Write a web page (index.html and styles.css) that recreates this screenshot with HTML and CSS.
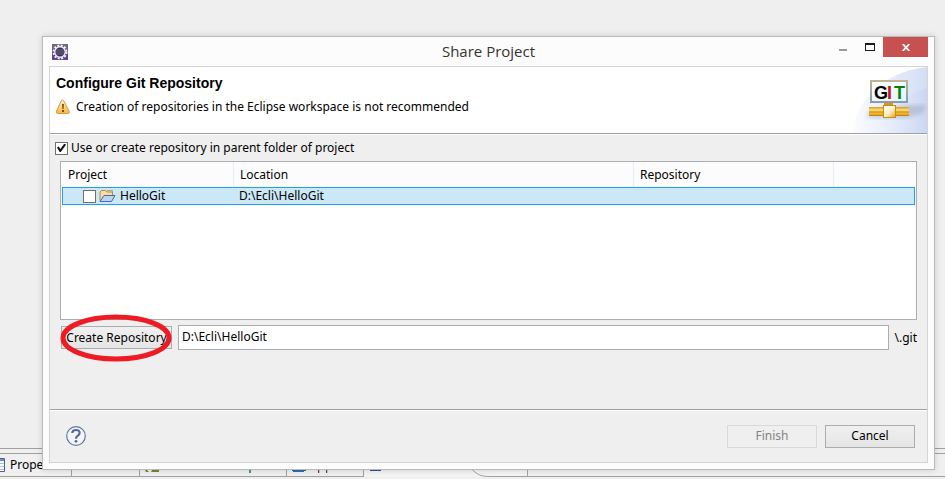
FILE: index.html
```html
<!DOCTYPE html>
<html lang="en">
<head>
<meta charset="utf-8">
<title>Share Project</title>
<link rel="stylesheet" href="styles.css">
</head>
<body>
<div class="workbench">
  <div class="editor-area"></div>
  <div class="view-tabs">
    <div class="tab tab-first">
      <svg class="view-icon" width="5" height="14" viewBox="0 0 5 14"><path d="M0 .5h4.500v13H0" fill="#fff" stroke="#49619a"/><path d="M0 1h4v2H0z" fill="#6f8fc8"/><path d="M0 5.500h4M0 8.500h4M0 11.500h4" stroke="#a9bfdd"/></svg>
      <span>Properties</span>
    </div>
    <div class="tab tab-second"></div>
    <div class="tab tab-third"><svg width="120" height="20" viewBox="0 0 120 20"><path d="M5 16h2l2 2H6zM12 16h7v2h-8z" fill="#7d8330"/><path d="M109 15h2v4h-2z" fill="#4f8f98"/></svg></div>
    <div class="tab tab-fourth"><svg width="60" height="20" viewBox="0 0 60 20"><path d="M5 16h14v1H5zM6 17h11v1H6z" fill="#2f6fae"/><path d="M31 15h1v4h-1zM39 15h1v4h-1z" fill="#a52a2a"/><path d="M32 15h1v4h-1zM40 15h1v4h-1z" fill="#9fd4ea"/></svg></div>
    <div class="tab tab-active"><svg class="active-icon" width="20" height="20" viewBox="0 0 20 20"><path d="M6 16h11v1H6z" fill="#2458a0"/></svg><svg class="curve" width="60" height="23" viewBox="0 0 60 23"><path d="M0 11C8 17 9 22.500 22 22.500H60" fill="none" stroke="#a0a0a0"/></svg></div>
    <div class="tab-rest"></div>
  </div>
</div>

<main class="dialog" role="dialog" aria-labelledby="dialog-title">
  <header class="titlebar">
    <svg class="app-icon" width="16" height="16" viewBox="0 0 16 16">
      <rect width="16" height="16" fill="#5d4391"/><path d="M0 0h16v5H0z" fill="#75667f"/>
      <circle cx="8" cy="8" r="6.500" fill="none" stroke="#f5f2f7" stroke-width="2" stroke-dasharray="2 1.400"/>
      <circle cx="8" cy="8" r="5.200" fill="#35304f" stroke="#eee9f2" stroke-width="1.400"/>
      <path d="M4 6h8M3.500 8h9M4 10h8" stroke="#6d6990"/>
    </svg>
    <h1 id="dialog-title">Share Project</h1>
    <div class="window-buttons">
      <button class="win" aria-label="Minimize"><svg width="10" height="10" viewBox="0 0 10 10"><path d="M1 7h8v2H1z" fill="#999"/></svg></button>
      <button class="win win-max" aria-label="Maximize"><svg width="10" height="8" viewBox="0 0 10 8"><path d="M0 0h10v8H0zM1 2v5h8V2z" fill="#1b1b1b" fill-rule="evenodd"/></svg></button>
      <button class="win win-close" aria-label="Close"><svg width="8" height="7" viewBox="0 0 8 7"><path d="M.7 0L7.300 7M7.300 0L.7 7" stroke="#fff" stroke-width="1.800"/></svg></button>
    </div>
  </header>

  <div class="content">
    <section class="banner">
      <div class="banner-text">
        <h2>Configure Git Repository</h2>
        <p><svg width="16" height="16" viewBox="0 0 16 16"><defs><linearGradient id="warn" x2="0" y2="1"><stop stop-color="#fff3cc"/><stop offset="1" stop-color="#f6b63c"/></linearGradient></defs><path d="M7.500 1Q8.500 1 9.200 2.500L14 12Q15 14.500 13 14.500H3Q.5 14.500 1.500 12L6 2.500Q6.500 1 7.500 1z" fill="url(#warn)" stroke="#d69b4c"/><path d="M7 5h2l-.4 5H7.400zM7 11h2v2H7z" fill="#805018"/></svg><span>Creation of repositories in the Eclipse workspace is not recommended</span></p>
      </div>
      <svg class="git-art" width="76" height="66" viewBox="0 0 76 66">
        <defs>
          <linearGradient id="sky" x1="0" x2="1"><stop stop-color="#fbfcff"/><stop offset="1" stop-color="#d3def5"/></linearGradient>
          <linearGradient id="sky2" x1="0" x2="1"><stop stop-color="#eef3fd" stop-opacity="0"/><stop offset="1" stop-color="#c6d4f0"/></linearGradient>
          <linearGradient id="gold" x2="0" y2="1"><stop stop-color="#d89a12"/><stop offset=".35" stop-color="#ffe48a"/><stop offset=".55" stop-color="#d9960c"/><stop offset=".75" stop-color="#f4bd3a"/><stop offset="1" stop-color="#b97a08"/></linearGradient>
          <linearGradient id="hub" x2="1" y2="1"><stop stop-color="#fff"/><stop offset=".5" stop-color="#fff3c8"/><stop offset="1" stop-color="#e0a320"/></linearGradient>
          <linearGradient id="frame" x2="0" y2="1"><stop stop-color="#bdb591"/><stop offset="1" stop-color="#879ab8"/></linearGradient>
          <linearGradient id="glass" x2="1" y2="1"><stop stop-color="#fff"/><stop offset="1" stop-color="#e0f5fb"/></linearGradient>
          <filter id="soft"><feGaussianBlur stdDeviation="2"/></filter>
        </defs>
        <path d="M1 66C5 35 30 5 76 0V66z" fill="url(#sky)"/>
        <path d="M36 45Q54 27 76 21V66H28z" fill="url(#sky2)" opacity=".7"/>
        <path d="M17 45L57 38 75 38 72 46 55 51H17z" fill="#8f9bb3" opacity=".42" filter="url(#soft)"/>
        <rect x="20" y="14" width="36" height="21" fill="url(#glass)" stroke="url(#frame)" stroke-width="2"/>
        <path d="M33 36h9v3h-9z" fill="#d59818"/>
        <path d="M18 40h14v9H18zM44 40h14v9H44z" fill="url(#gold)"/>
        <rect x="32.500" y="38.500" width="12" height="12" fill="url(#hub)" stroke="#ce8c0c"/>
        <g class="git-word"><text x="23" y="32">G</text><text x="36" y="32" fill="#c8101a">I</text><text x="43" y="32" fill="#087f0c">T</text></g>
      </svg>
    </section>

    <section class="page">
      <label class="option"><input type="checkbox" checked><span>Use or create repository in parent folder of project</span></label>
      <div class="table-box">
        <table>
          <colgroup><col class="c-project"><col class="c-location"><col class="c-repository"><col></colgroup>
          <thead><tr><th>Project</th><th>Location</th><th>Repository</th><th></th></tr></thead>
          <tbody><tr>
            <td><label class="project"><input type="checkbox"><svg width="17" height="14" viewBox="0 0 17 14"><path d="M1 11.500V3L2.500 1.500h4L8 3h5.500v3" fill="#f8dda0" stroke="#b58a48"/><path d="M8 1.500h5.500V3" fill="none" stroke="#c9a15c"/><path d="M1 12.500L5 6.500h11L12.500 12.500z" fill="#b8d5f5" stroke="#4668ac"/></svg><span>HelloGit</span></label></td>
            <td>D:\Ecli\HelloGit</td><td></td><td></td>
          </tr></tbody>
        </table>
      </div>
      <div class="create-row">
        <div class="create-wrap">
          <button class="btn create">Create Repository</button>
          <svg class="marker" viewBox="0 0 112 48"><ellipse cx="56" cy="24" rx="53" ry="21" fill="none" stroke="#ed1c24" stroke-width="5"/></svg>
        </div>
        <input class="path" id="repo-path" type="text" value="D:\Ecli\HelloGit">
        <label for="repo-path">\.git</label>
      </div>
    </section>

    <footer class="actions">
      <button class="help" aria-label="Help"><svg width="20" height="20" viewBox="0 0 20 20"><circle cx="10" cy="10" r="9.300" fill="#f4f5f8" stroke="#6478a0" stroke-width="1.200"/><path d="M6.300 7Q6.300 4 10 4T13.600 7Q13.600 8.700 11.600 9.900Q10 10.900 10 12.700" fill="none" stroke="#526a98" stroke-width="2.200"/><circle cx="10" cy="15.300" r="1.400" fill="#526a98"/></svg></button>
      <button class="btn" disabled>Finish</button>
      <button class="btn">Cancel</button>
    </footer>
  </div>
</main>
</body>
</html>
```
FILE: styles.css
```css
* { box-sizing: border-box; }

body {
  margin: 0;
  background: #efefef;
  color: #000;
  font: 12px/16px "Noto Sans", "Open Sans", sans-serif;
}

h1, h2, p { margin: 0; font-weight: normal; }
svg { display: block; flex: none; }
button, input { font: inherit; color: inherit; margin: 0; }

.workbench {
  display: flex;
  flex-direction: column;
  height: 100vh;
  overflow: hidden;
}
.editor-area { flex: 1; border-bottom: 1px solid #a0a0a0; margin-bottom: 4px; }
.view-tabs {
  display: flex;
  height: 24px;
  margin-bottom: 2px;
  border-top: 1px solid #a0a0a0;
  background: #f0f0f0;
}
.tab { border-right: 1px solid #a0a0a0; border-bottom: 1px solid #a0a0a0; overflow: hidden; }
.tab-first { display: flex; align-items: center; gap: 5px; width: 72px; }
.tab-second { width: 68px; }
.tab-third { width: 147px; }
.tab-fourth { width: 77px; }
.tab-active { display: flex; justify-content: space-between; width: 164px; border-bottom: 0; background: #f3f3f3; }
.tab-rest { flex: 1; border-bottom: 1px solid #a0a0a0; }

.dialog {
  position: absolute;
  inset: 36px 10px 9px 42px;
  display: flex;
  flex-direction: column;
  padding: 0 6px 6px;
  border: 1px solid #b9b9b9;
  background: #fcfcfc;
  box-shadow: 0 0 6px rgba(0, 0, 0, .15);
}

.titlebar {
  display: grid;
  grid-template-columns: 1fr auto 1fr;
  height: 29px;
  align-items: center;
}
.app-icon { margin-left: 3px; }
.titlebar h1 { padding-bottom: 2px; color: #333; font: 15px/26px "Open Sans", sans-serif; }
.window-buttons { display: flex; align-self: start; justify-content: flex-end; }
.win {
  display: flex;
  align-items: center;
  justify-content: center;
  width: 27px;
  height: 20px;
  padding: 0;
  border: 0;
  background: none;
}
.win-close { width: 45px; background: #c75050; }

.content {
  flex: 1;
  display: flex;
  flex-direction: column;
  border: 1px solid #d5d5d5;
  background: #efefef;
}
.banner {
  display: flex;
  justify-content: space-between;
  height: 67px;
  border-bottom: 1px solid #a0a0a0;
  background: #fff;
}
.banner-text { padding: 8px 6px; }
.banner h2 { font: bold 14px/16px "Liberation Sans", Arial, sans-serif; }
.banner p { display: flex; gap: 5px; margin-top: 8px; margin-left: -1px; }
.git-word { font: bold 18px "Liberation Sans", Arial, sans-serif; }

.page {
  flex: 1;
  padding: 5px 10px 0;
  border-top: 1px solid #fff;
}
.option { display: flex; align-items: center; gap: 3px; margin-left: -5px; }

input[type="checkbox"] {
  appearance: none;
  display: grid;
  place-items: center;
  flex: none;
  width: 13px;
  height: 13px;
  border: 1px solid #707070;
  background: #fff;
}
input[type="checkbox"]:checked::before {
  content: "";
  width: 9px;
  height: 9px;
  background: #111;
  clip-path: polygon(0 45%, 18% 32%, 38% 60%, 82% 0, 100% 14%, 42% 95%, 30% 95%);
}

.table-box {
  height: 159px;
  margin-top: 5px;
  padding: 0 1px;
  border: 1px solid #abadb3;
  background: #fff;
}
table { width: 100%; border-collapse: separate; border-spacing: 0; table-layout: fixed; }
.c-project { width: 172px; }
.c-location { width: 400px; }
.c-repository { width: 200px; }
th {
  height: 25px;
  padding: 0 6px;
  border-right: 1px solid #e5edf6;
  background: #fcfcfc;
  font-weight: normal;
  text-align: left;
}
th:last-child { border-right: 0; }
td {
  height: 18px;
  padding: 0 5px;
  border: solid #26a0da;
  border-width: 1px 0;
  background: #cbe8f6;
  line-height: 16px;
}
td:first-child { border-left-width: 1px; padding-left: 20px; }
td:last-child { border-right-width: 1px; }
.project { display: flex; align-items: center; gap: 4px; }
.project input { margin-right: -1px; }

.create-row { display: flex; align-items: center; gap: 6px; margin-top: 5px; }
.create-wrap { position: relative; }
.btn {
  width: 90px;
  height: 23px;
  padding: 0;
  border: 1px solid #acacac;
  background: linear-gradient(#f0f0f0, #e5e5e5);
  white-space: nowrap;
}
.btn:disabled { border-color: #d9d9d9; background: #efefef; color: #838383; }
.create { display: block; width: 111px; margin-left: 1px; }
.marker { position: absolute; top: -12px; left: 0; width: 112px; height: 48px; }
.path {
  flex: 1;
  min-width: 0;
  height: 25px;
  padding: 0 3px 3px;
  border: 1px solid #abadb3;
  background: #fff;
}

.actions {
  display: flex;
  align-items: center;
  gap: 8px;
  height: 53px;
  padding: 0 12px 0 16px;
  border-top: 1px solid #a0a0a0;
  box-shadow: inset 0 1px #fff;
}
.help { margin-right: auto; padding: 0; border: 0; background: none; }
```
